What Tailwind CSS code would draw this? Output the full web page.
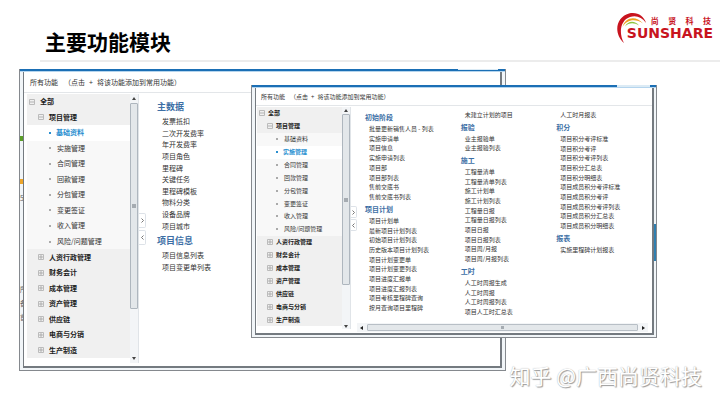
<!DOCTYPE html>
<html lang="zh-CN">
<head>
    <meta charset="UTF-8">
    <meta name="viewport" content="width=device-width, initial-scale=1.0">
    <title>主要功能模块</title>
    <script src="https://cdn.jsdelivr.net/npm/@tailwindcss/browser@4"></script>
    <style>
        body {
            font-family: 'Noto Sans CJK SC', sans-serif;
        }
    </style>
</head>
<body class="bg-white min-h-screen flex flex-col text-[#333] overflow-hidden">
    <header class="flex justify-between items-start ml-10 h-[62px] border-b-2 border-[#ececec]">
        <h1 class="pl-[5px] pt-7 text-[21px] leading-[26px] font-bold text-black">主要功能模块</h1>
        <div class="flex pt-3 pr-[7px] text-[#c8141e]">
            <svg class="w-[34px] h-[32px] -mr-6" viewBox="0 0 34 32" fill="none">
                <path d="M7 31C-4 21 -1 5 12 1.500C20 -.5 27 4 29 11C25 5 19 3 13 5C4 8 1 20 7 31Z" fill="#c8141e"/>
                <path d="M5.500 15C8 5 19 3 26 11.500C19 6.500 10 7 5.500 15Z" fill="#f0a020"/>
                <path d="M8 14.500C11 8.500 18 8.500 22 13.500C17 10.500 12 10.500 8 14.500Z" fill="#8cc63f"/>
            </svg>
            <div class="flex flex-col pt-1">
                <div class="flex justify-between pl-6 pr-[2px] text-[8px] leading-[10px] font-bold">
                    <span>尚</span><span>贤</span><span>科</span><span>技</span>
                </div>
                <div class="font-['DejaVu_Sans'] text-[14px] leading-[14px] font-bold">SUNSHARE</div>
            </div>
        </div>
    </header>

    <main class="relative flex-grow pt-[7px]">
        <!-- 主数据窗口 -->
        <section class="ml-[19px] mr-[214px] h-[302px] flex flex-col border border-t-0 border-[#85898e] bg-[#f1f5f8]">
            <div class="flex h-[2px] bg-[#1b6fb5]">
                <div class="ml-auto mr-[7px] w-10 h-px bg-[#dcebf5]"></div>
            </div>
            <div class="h-px bg-[#b5d5ee]"></div>
            <div class="flex flex-1 min-h-0">
                <div class="w-[3px] pt-[64px] overflow-hidden text-[7px] leading-[8px] text-[#666]">
                    <div class="h-[5px] bg-[#5a9e28]"></div>
                    <div class="h-[5px] mt-[38px] bg-[#eda52a]"></div>
                    <div class="mt-[10px]">5.</div>
                    <div class="mt-[83px]">所</div>
                    <div class="mt-[6px]">备</div>
                    <div class="mt-[6px]">首</div>
                </div>
                <div class="flex flex-col flex-1 mb-[2px] mr-[3px] border-l border-b-2 border-r-2 border-[#747a80] bg-white">
                    <p class="flex gap-1 h-[21px] pl-[6px] items-center border-b border-[#e3e6e9] text-[7px]">
                        <span class="mr-[2px]">所有功能</span><span>（点击</span><span>+</span><span>将该功能添加到常用功能）</span>
                    </p>
                    <div class="flex flex-1 min-h-0 pl-[3px] pt-px">
                        <ul id="tree-main" class="grid auto-rows-fr w-[103px] h-[264px] bg-[#f0f0f0] text-[7px]"></ul>
                        <div class="w-[9px] h-[269px] flex flex-col items-center gap-[3px] py-[3px] bg-[#f3f5f7] border-r border-[#e0e4e8]">
                            <svg class="w-[4px] h-[3px]" viewBox="0 0 4 3"><path d="M2 0L4 3H0Z" fill="#444"/></svg>
                            <div class="w-2 h-[206px] flex items-center justify-center rounded-[1px] border border-[#aeb6be] bg-[#e3e7ea]">
                                <div class="w-1 h-1 bg-[#a5abb1]"></div>
                            </div>
                            <svg class="w-[4px] h-[3px] mt-auto" viewBox="0 0 4 3"><path d="M0 0H4L2 3Z" fill="#444"/></svg>
                        </div>
                        <div class="flex flex-col gap-[2px] w-[7px] pt-[119px]">
                            <button class="h-[15px] flex items-center justify-center rounded-r-[2px] border border-l-0 border-[#dde2e8]" aria-label="展开">
                                <svg class="w-[3px] h-[5px]" viewBox="0 0 3 5" fill="none" stroke="#777"><path d="M.5 .5L2.500 2.500L.5 4.500"/></svg>
                            </button>
                            <button class="h-[15px] flex items-center justify-center rounded-r-[2px] border border-l-0 border-[#dde2e8]" aria-label="收起">
                                <svg class="w-[3px] h-[5px]" viewBox="0 0 3 5" fill="none" stroke="#777"><path d="M2.500 .5L.5 2.500L2.500 4.500"/></svg>
                            </button>
                        </div>
                        <div class="flex-1 pl-[11px] pt-[4px] text-[7px]">
                            <h2 class="text-[9px] leading-[18px] font-bold text-[#3d6fa5]">主数据</h2>
                            <ul id="list-data" class="grid auto-rows-fr h-[116px] pl-[5px]"></ul>
                            <h2 class="text-[9px] leading-[18px] font-bold text-[#3d6fa5]">项目信息</h2>
                            <ul id="list-info" class="grid auto-rows-fr h-[23px] pl-[5px]"></ul>
                        </div>
                    </div>
                </div>
            </div>
        </section>

        <!-- 实施管理窗口 -->
        <section class="absolute left-[251px] right-[63px] top-[23px] h-[253px] flex flex-col border border-t-0 border-[#85898e] bg-[#f1f5f8]">
            <div class="flex h-[2px] bg-[#1b6fb5]">
                <div class="ml-auto mr-[6px] w-[33px] h-[2px] bg-[#dcebf5]"></div>
            </div>
            <div class="h-px bg-[#b5d5ee]"></div>
            <div class="flex flex-1 min-h-0">
                <div class="flex flex-col flex-1 ml-[3px] mb-[2px] border-l border-b-2 border-r-2 border-[#747a80] bg-white">
                    <p class="flex gap-[3px] h-[18px] pl-[5px] items-center border-b border-[#e3e6e9] text-[6px]">
                        <span class="mr-[2px]">所有功能</span><span>（点击</span><span>+</span><span>将该功能添加到常用功能）</span>
                    </p>
                    <div class="flex flex-1 min-h-0 pl-px pt-px">
                        <ul id="tree-impl" class="grid auto-rows-fr w-[85px] h-[219px] bg-[#f0f0f0] text-[6px]"></ul>
                        <div class="w-[9px] h-[222px] flex flex-col items-center gap-[2px] pt-[2px] pb-px bg-[#f3f5f7] border-r border-[#e0e4e8]">
                            <svg class="w-[4px] h-[3px]" viewBox="0 0 4 3"><path d="M2 0L4 3H0Z" fill="#444"/></svg>
                            <div class="w-2 h-[171px] flex items-center justify-center rounded-[1px] border border-[#aeb6be] bg-[#e3e7ea]">
                                <div class="w-1 h-1 bg-[#a5abb1]"></div>
                            </div>
                            <svg class="w-[4px] h-[3px] mt-auto" viewBox="0 0 4 3"><path d="M0 0H4L2 3Z" fill="#444"/></svg>
                        </div>
                        <div class="flex flex-col flex-1">
                            <div class="flex flex-1 min-h-0">
                                <div class="flex flex-col gap-px w-[6px] pt-[99px]">
                                    <button class="h-[12px] flex items-center justify-center rounded-r-[2px] border border-l-0 border-[#dde2e8]" aria-label="展开">
                                        <svg class="w-[3px] h-[5px]" viewBox="0 0 3 5" fill="none" stroke="#777"><path d="M.5 .5L2.500 2.500L.5 4.500"/></svg>
                                    </button>
                                    <button class="h-[12px] flex items-center justify-center rounded-r-[2px] border border-l-0 border-[#dde2e8]" aria-label="收起">
                                        <svg class="w-[3px] h-[5px]" viewBox="0 0 3 5" fill="none" stroke="#777"><path d="M2.500 .5L.5 2.500L2.500 4.500"/></svg>
                                    </button>
                                </div>
                                <div id="impl-columns" class="flex-1 grid grid-cols-3 pl-[8px] pt-[3px] text-[6px]"></div>
                            </div>
                            <div class="flex items-center h-[9px] ml-[6px] mr-1 mb-px px-[3px] gap-[4px] bg-[#f3f5f7]">
                                <svg class="w-[3px] h-[4px]" viewBox="0 0 3 4"><path d="M3 0V4L0 2Z" fill="#222"/></svg>
                                <div class="flex-1 h-[7px] flex items-center justify-center rounded-[1px] border border-[#b8bfc6] bg-[#e3e7ea]">
                                    <div class="w-[3px] h-[3px] bg-[#a5abb1]"></div>
                                </div>
                                <svg class="w-[3px] h-[4px]" viewBox="0 0 3 4"><path d="M0 0V4L3 2Z" fill="#222"/></svg>
                            </div>
                        </div>
                    </div>
                </div>
                <div class="w-[2px] pt-[136px]">
                    <div class="h-[37px] bg-[#2f7fb0]"></div>
                </div>
            </div>
        </section>

        <p class="absolute right-[18px] bottom-4 text-[21px] leading-[28px] text-white [text-shadow:1px_1px_1px_#999,0_0_1px_#aaa]">知乎 @广西尚贤科技</p>
    </main>

    <script>
        const subItems = ['基础资料', '实施管理', '合同管理', '回款管理', '分包管理', '变更签证', '收入管理', '风险/问题管理'];
        const modules = ['人资行政管理', '财务会计', '成本管理', '资产管理', '供应链', '电商与分销', '生产制造'];

        const columns = [
            [
                { title: '初始阶段', size: 'h-[78px]', items: ['批量更新销售人员 - 列表', '实施申请单', '项目信息', '实施申请列表', '项目部', '项目部列表', '售前交底书', '售前交底书列表'] },
                { title: '项目计划', size: 'h-[97px]', items: ['项目计划单', '最新项目计划列表', '初始项目计划列表', '历史版本项目计划列表', '项目计划变更单', '项目计划变更列表', '项目进度汇报单', '项目进度汇报列表', '项目考核里程碑查询', '按月查询项目里程碑'] }
            ],
            [
                { size: 'h-[10px]', items: ['未建立计划的项目'] },
                { title: '报验', size: 'h-[19px]', items: ['业主报验单', '业主报验列表'] },
                { title: '施工', size: 'h-[97px]', items: ['工程量清单', '工程量清单列表', '施工计划单', '施工计划列表', '工程量日报', '工程量日报列表', '项目日报', '项目日报列表', '项目周/月报', '项目周/月报列表'] },
                { title: '工时', size: 'h-[39px]', items: ['人工时周报生成', '人工时周报', '人工时周报列表', '项目人工时汇总表'] }
            ],
            [
                { size: 'h-[10px]', items: ['人工时月报表'] },
                { title: '积分', size: 'h-[97px]', items: ['项目积分考评标准', '项目积分考评', '项目积分考评列表', '项目积分汇总表', '项目积分明细表', '项目成员积分考评标准', '项目成员积分考评', '项目成员积分考评列表', '项目成员积分汇总表', '项目成员积分明细表'] },
                { title: '报表', size: 'h-[10px]', items: ['实施里程碑计划报表'] }
            ]
        ];

        const toggle = (name, open) => `
            <button class="w-[6px] h-[6px]" aria-label="${name}">
                <svg class="w-full h-full" viewBox="0 0 6 6" fill="none" stroke="#bbb">
                    <path d="M.5 .5H5.500V5.500H.5Z"/><path d="${open ? 'M1 3H5' : 'M1 3H5M3 1V5'}" stroke="#999" stroke-width=".7"/>
                </svg>
            </button>`;

        const listItems = items => items.map(name => `<li class="flex items-center leading-none whitespace-nowrap"><a href="#">${name}</a></li>`).join('');

        // indent: clases de sangría para cada nivel del árbol
        function renderTree(id, selected, indent) {
            const group = (name, open, pad) => `<li class="flex items-center leading-none font-bold text-[#222] ${indent.gap} ${pad}">${toggle(name, open)}<span>${name}</span></li>`;
            const leaf = name => name === selected
                ? `<li class="flex items-center gap-[5px] leading-none bg-white font-bold text-[#2a8fd0] ${indent.leaf}"><i class="w-[2px] h-[2px] bg-[#2a8fd0]"></i><a href="#">${name}</a></li>`
                : `<li class="flex items-center gap-[6px] leading-none bg-[#f8f8f8] ${indent.leaf}"><i class="w-[2px] h-[2px] bg-[#aaa]"></i><a href="#">${name}</a></li>`;
            document.getElementById(id).innerHTML =
                group('全部', true, indent.root) +
                group('项目管理', true, indent.module) +
                subItems.map(leaf).join('') +
                modules.map(name => group(name, false, indent.module)).join('');
        }

        renderTree('tree-main', '基础资料', { gap: 'gap-[5px]', root: 'pl-[2px]', module: 'pl-[11px]', leaf: 'pl-[22px]' });
        renderTree('tree-impl', '实施管理', { gap: 'gap-[3px]', root: 'pl-[2px]', module: 'pl-[10px]', leaf: 'pl-[19px]' });

        document.getElementById('list-data').innerHTML = listItems(['发票抵扣', '二次开发费率', '年开发费率', '项目角色', '里程碑', '关键任务', '里程碑模板', '物料分类', '设备品牌', '项目城市']);
        document.getElementById('list-info').innerHTML = listItems(['项目信息列表', '项目变更单列表']);

        document.getElementById('impl-columns').innerHTML = columns.map(groups => `
            <div>${groups.map(group => `
                ${group.title ? `<h2 class="text-[7px] leading-[14px] font-bold text-[#3d6fa5]">${group.title}</h2>` : ''}
                <ul class="grid auto-rows-fr pl-[4px] ${group.size}">${listItems(group.items)}</ul>`).join('')}
            </div>`).join('');
    </script>
</body>
</html>
